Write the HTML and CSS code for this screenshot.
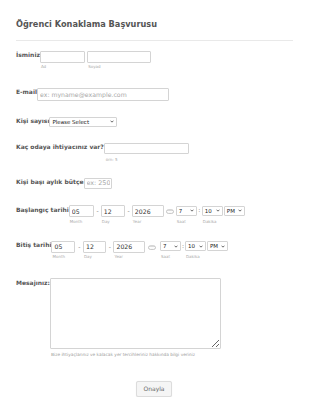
FILE: index.html
```html
<!DOCTYPE html>
<html lang="tr">
<head>
<meta charset="utf-8">
<title>Öğrenci Konaklama Başvurusu</title>
<link rel="stylesheet" href="styles.css">
</head>
<body>
<form class="form">
  <h1 class="title">Öğrenci Konaklama Başvurusu</h1>
  <div class="divider"></div>

  <div class="row row-first">
    <label class="lbl">İsminiz</label>
    <div class="fields">
      <div class="field"><input class="inp w-ad" type="text"><span class="sub">Ad</span></div>
      <div class="field"><input class="inp w-soyad" type="text"><span class="sub">Soyad</span></div>
    </div>
  </div>

  <div class="row row-email">
    <label class="lbl">E-mail</label>
    <input class="inp w-email" type="text" placeholder="ex: myname@example.com">
  </div>

  <div class="row">
    <label class="lbl">Kişi sayısı</label>
    <div class="sel w-kisi"><span class="sel-text">Please Select</span><svg class="chev" viewBox="0 0 6 4"><path d="M0.8 0.8 L3 3 L5.2 0.8" fill="none" stroke="#333" stroke-width="1.1"/></svg></div>
  </div>

  <div class="row">
    <label class="lbl">Kaç odaya ihtiyacınız var?</label>
    <div class="field"><input class="inp w-oda" type="text"><span class="sub sub-oda">örn: 5</span></div>
  </div>

  <div class="row row-butce">
    <label class="lbl">Kişi başı aylık bütçe</label>
    <input class="inp w-butce" type="text" placeholder="ex: 250">
  </div>

  <div class="row">
    <label class="lbl">Başlangıç tarihi</label>
    <div class="fields">
      <div class="field"><input class="inp w-month" type="text" value="05"><span class="sub">Month</span></div>
      <span class="sep">-</span>
      <div class="field"><input class="inp w-day" type="text" value="12"><span class="sub">Day</span></div>
      <span class="sep">-</span>
      <div class="field"><input class="inp w-year" type="text" value="2026"><span class="sub">Year</span></div>
      <svg class="cal" viewBox="0 0 8 5"><rect x="0.5" y="0.8" width="7" height="3.6" rx="1.8" fill="#fff" stroke="#b5b5b5" stroke-width="0.8"/><line x1="1.2" y1="1.6" x2="6.8" y2="1.6" stroke="#c8c8c8" stroke-width="0.6"/></svg>
      <div class="field"><div class="sel w-time"><span class="sel-text">7</span><svg class="chev" viewBox="0 0 6 4"><path d="M0.8 0.8 L3 3 L5.2 0.8" fill="none" stroke="#333" stroke-width="1.1"/></svg></div><span class="sub">Saat</span></div>
      <span class="colon">:</span>
      <div class="field"><div class="sel w-time"><span class="sel-text">10</span><svg class="chev" viewBox="0 0 6 4"><path d="M0.8 0.8 L3 3 L5.2 0.8" fill="none" stroke="#333" stroke-width="1.1"/></svg></div><span class="sub">Dakika</span></div>
      <div class="field ampm"><div class="sel w-time"><span class="sel-text">PM</span><svg class="chev" viewBox="0 0 6 4"><path d="M0.8 0.8 L3 3 L5.2 0.8" fill="none" stroke="#333" stroke-width="1.1"/></svg></div></div>
    </div>
  </div>

  <div class="row">
    <label class="lbl">Bitiş tarihi</label>
    <div class="fields">
      <div class="field"><input class="inp w-month2" type="text" value="05"><span class="sub">Month</span></div>
      <span class="sep sep-wide">-</span>
      <div class="field"><input class="inp w-day2" type="text" value="12"><span class="sub">Day</span></div>
      <span class="sep sep-wide">-</span>
      <div class="field"><input class="inp w-year" type="text" value="2026"><span class="sub">Year</span></div>
      <svg class="cal cal2" viewBox="0 0 8 5"><rect x="0.5" y="0.8" width="7" height="3.6" rx="1.8" fill="#fff" stroke="#b5b5b5" stroke-width="0.8"/><line x1="1.2" y1="1.6" x2="6.8" y2="1.6" stroke="#c8c8c8" stroke-width="0.6"/></svg>
      <div class="field"><div class="sel w-time"><span class="sel-text">7</span><svg class="chev" viewBox="0 0 6 4"><path d="M0.8 0.8 L3 3 L5.2 0.8" fill="none" stroke="#333" stroke-width="1.1"/></svg></div><span class="sub">Saat</span></div>
      <span class="colon colon2">:</span>
      <div class="field"><div class="sel w-time"><span class="sel-text">10</span><svg class="chev" viewBox="0 0 6 4"><path d="M0.8 0.8 L3 3 L5.2 0.8" fill="none" stroke="#333" stroke-width="1.1"/></svg></div><span class="sub">Dakika</span></div>
      <div class="field ampm"><div class="sel w-time"><span class="sel-text">PM</span><svg class="chev" viewBox="0 0 6 4"><path d="M0.8 0.8 L3 3 L5.2 0.8" fill="none" stroke="#333" stroke-width="1.1"/></svg></div></div>
    </div>
  </div>

  <div class="row row-msg">
    <label class="lbl">Mesajınız:</label>
    <div class="field"><textarea class="txt"></textarea><span class="sub sub-msg">Bize ihtiyaçlarınız ve kalacak yer tercihleriniz hakkında bilgi veriniz</span></div>
  </div>

  <div class="actions">
    <button class="btn" type="button">Onayla</button>
  </div>
</form>
</body>
</html>
```

FILE: styles.css
```css
* { box-sizing: border-box; margin: 0; padding: 0; }
html, body { background: #fff; }
body { margin: 0; font-family: "DejaVu Sans", Verdana, sans-serif; color: #555; }

.form { width: 310px; padding: 19px 17px 0 16px; }

.title { font-size: 8.2px; line-height: 10px; font-weight: bold; color: #555; }

.divider { width: 277px; height: 1px; background: #e9e9e9; margin-top: 11px; }

.row { display: flex; align-items: flex-start; margin-top: 16px; }
.row-first { margin-top: 9.5px; }
.row-email { margin-top: 17.5px; }
.row-butce { margin-top: 14.5px; }
.row-msg { margin-top: 18px; }

.lbl { font-size: 6px; line-height: 8px; font-weight: bold; color: #555; padding-top: 0.5px; white-space: nowrap; }

.fields { display: flex; align-items: flex-start; }
.field { display: flex; flex-direction: column; }

.inp {
  display: block;
  height: 12px;
  border: 1px solid #d4d4d4;
  border-radius: 1px;
  background: #fff;
  font: 6.2px/10px "DejaVu Sans", Verdana, sans-serif;
  color: #333;
  padding: 0 2px;
  outline: none;
}
.inp::placeholder { color: #a8a8a8; }

.w-ad { width: 45px; margin-right: 2.3px; }
.w-soyad { width: 64px; }
.w-email { width: 132px; height: 13px; }
.w-oda { width: 85px; height: 11px; }
.w-butce { width: 28px; height: 11.5px; padding: 0 1px 0 2px; font-size: 6.4px; }
.w-month { width: 25.5px; }
.w-day { width: 24.5px; }
.w-year { width: 32px; }
.w-month2 { width: 24px; }
.w-day2 { width: 23px; }

.sub { font-size: 4px; line-height: 6px; color: #aaa; padding-left: 1px; margin-top: 1.5px; white-space: nowrap; }
.sub-oda { margin-top: 3.5px; padding-left: 2px; }
.sub-msg { font-size: 4.3px; margin-top: 2.5px; padding-left: 1px; color: #999; }

.sep { width: 6.5px; text-align: center; font-size: 6px; line-height: 12px; color: #777; }
.sep-wide { width: 7.5px; }
.colon { width: 5px; text-align: center; font-size: 6px; line-height: 10px; color: #777; }
.colon2 { width: 4px; }

.cal { width: 8px; height: 5px; margin: 4px 1.5px 0 2.5px; }
.cal2 { margin: 4px 3.5px 0 3px; }

.sel {
  display: flex;
  align-items: center;
  justify-content: space-between;
  height: 10px;
  border: 1px solid #d4d4d4;
  border-radius: 1px;
  background: #fff;
  padding: 0 2px 0 2px;
  margin-top: 0.5px;
  margin-bottom: 1.5px;
}
.sel-text { font-size: 5.5px; line-height: 8px; color: #222; white-space: nowrap; }
.chev { width: 4px; height: 3px; }
.w-kisi { width: 68px; margin-top: 0; margin-bottom: 0; }
.w-time { width: 21px; }
.ampm { margin-left: 1px; }

.txt {
  display: block;
  width: 171px;
  height: 71px;
  border: 1px solid #d4d4d4;
  border-radius: 1px;
  background: #fff;
  resize: both;
  outline: none;
  font: 6px "DejaVu Sans", sans-serif;
}

.actions { display: flex; justify-content: center; margin-top: 23px; padding-right: 1px; }
.btn {
  width: 36px;
  height: 16px;
  border: 1px solid #dcdcdc;
  border-radius: 2px;
  background: #f5f5f5;
  box-shadow: 0 0.5px 1px rgba(0,0,0,0.08);
  font: 6px/14px "DejaVu Sans", Verdana, sans-serif;
  color: #666;
}
```
